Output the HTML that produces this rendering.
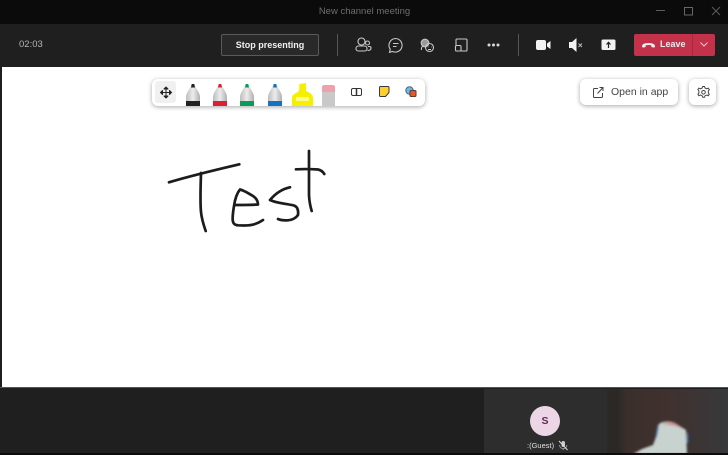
<!DOCTYPE html>
<html><head><meta charset="utf-8">
<style>
html,body{margin:0;padding:0;width:728px;height:455px;overflow:hidden;background:#1f1f1f;font-family:"Liberation Sans",sans-serif}
#w{position:absolute;left:0;top:0;width:728px;height:455px;filter:blur(.3px)}
.a{position:absolute}
svg{position:absolute;overflow:visible}
.pill{background:#fff;border-radius:6px;box-shadow:0 1px 5px rgba(0,0,0,.35)}
</style></head>
<body><div id="w">
<div class="a" style="left:0;top:0;width:728px;height:24px;background:#0b0b0b"></div>
<div class="a" style="left:0;top:24px;width:728px;height:43px;background:#1f1f1f"></div>
<div class="a" style="left:0;top:5px;width:729px;text-align:center;color:#6e6e6e;font-size:9.500px;line-height:13px">New channel meeting</div>
<svg style="left:0;top:0" width="728" height="67" fill="none" stroke="#8a8a8a">
<path d="M656 10.500h9" stroke="#5c5c5c"/><rect x="684.500" y="7.500" width="8" height="7.500" stroke="#666"/><path d="M712 7l8 8M720 7l-8 8" stroke="#5c5c5c"/>
<path d="M337.500 34v22M518.500 34v22" stroke="#555"/>
<g stroke="#c8c8c8" stroke-width="1.100">
<circle cx="361.500" cy="41.500" r="3.500"/><circle cx="367.500" cy="43" r="2"/><rect x="356" y="46" width="11" height="5" rx="2.400"/><path d="M368 46.500h1.500q1.500 0 1.500 1.500q0 2.500-3.500 2.500"/>
<path d="M395.500 38.500a6.800 6.800 0 1 1-3 13l-3 .8 .8-3a6.800 6.800 0 0 1 5.200-10.800z"/><path d="M393 43.500h5.500M393 46.500h3.500"/>
<circle cx="425" cy="43" r="3.800" fill="#999"/><path d="M421.500 50q-.5-3.500 2-4"/><circle cx="429.500" cy="47.500" r="4"/><path d="M428 47h.5M431 47h.5M428 49.500h3"/>
<path d="M456 45v-5q0-1 1-1h9q1 0 1 1v10q0 1-1 1h-5"/><rect x="455.500" y="45.500" width="5.500" height="5.500" rx="1"/>
</g>
<g fill="#d8d8d8" stroke="none"><circle cx="489" cy="45" r="1.500"/><circle cx="493.500" cy="45" r="1.500"/><circle cx="498" cy="45" r="1.500"/></g>
<g fill="#f2f2f2" stroke="none">
<rect x="536" y="40" width="10" height="10" rx="2"/><path d="M547 43.500l3.500-2.500v8l-3.500-2.500z"/>
<path d="M569 42h3l4.500-4v14l-4.500-4h-3z"/>
<path d="M603 39.500h11q1.500 0 1.500 1.500v7.500q0 1.500-1.500 1.500h-11q-1.500 0-1.500-1.500v-7.500q0-1.500 1.500-1.500z"/>
</g>
<path d="M578.500 43.500l3.500 3.500M582 43.500l-3.500 3.500" stroke="#bbb"/>
<path d="M608.500 48v-5.500M606.500 44.500l2-2.200 2 2.200" stroke="#222" stroke-width="1.200"/>
</svg>
<div class="a" style="left:19px;top:39px;color:#b5b5b5;font-size:9.500px;line-height:12px">02:03</div>
<div class="a" style="left:221px;top:34px;width:96px;height:20px;border:1px solid #5a5a5a;border-radius:2px;background:#292929;color:#f0f0f0;font-size:9px;font-weight:bold;line-height:21px;text-align:center">Stop presenting</div>
<div class="a" style="left:634px;top:34px;width:58px;height:22px;background:#c4314b;border-radius:2px 0 0 2px;color:#eee;font-size:9px;font-weight:bold;line-height:21px;text-indent:26px">Leave</div>
<div class="a" style="left:692px;top:34px;width:1px;height:22px;background:#a82a41"></div>
<div class="a" style="left:693px;top:34px;width:22px;height:22px;background:#c4314b;border-radius:0 2px 2px 0"></div>
<svg style="left:0;top:0" width="728" height="67" fill="none">
<path d="M642 46.500q0-3.500 6.500-3.500t6.500 3.500q0 1-1.500 1l-1.500-.2q-.8-.2-.8-2q-2.700-.7-5.400 0q0 1.800-.8 2l-1.500.2q-1.500 0-1.500-1z" fill="#f5e8ea"/>
<path d="M700.500 42.500l3.500 3.500 3.500-3.500" stroke="#efc8cf"/>
</svg>

<div class="a" style="left:2px;top:67px;width:726px;height:320px;background:#fff"></div>
<div class="a" style="left:0;top:387px;width:728px;height:1px;background:#555"></div>

<svg style="left:0;top:0" width="728" height="455" fill="none" stroke="#1c1c1c" stroke-width="2.700" stroke-linecap="round" stroke-linejoin="round">
<path d="M169 182.300C190 176 215 170 239.300 164.300"/>
<path d="M201 173C200.500 190 200 202 201 212C201.800 220 204 226 205.700 231"/>
<path d="M235 205C242 205 252 205 258 204.500C258 201 256 198 253 196C248 193 243 190 240 189.500C237 193 235 199 234 206C233 212 232.500 217 232.700 220C233 224 235 225 238 225.300C243 225.600 249 225.500 252 224.800C256 224 260 222 263 220"/>
<path d="M290 187.300C282 189 275 194 270 200C276 203 288 204 294 205.500C298 207 298.500 211 298 215C296 218 292 220 288 220.300C284 220.500 280 220 278 219"/>
<path d="M309 151C309 165 309 180 309 195C309.300 202 310.500 207 311.700 211"/>
<path d="M296 169.300C303 169 311 169 318 169.500C321 170 323 172 324.300 174"/>
</svg>

<div class="a pill" style="left:152px;top:79px;width:273px;height:27px"></div>
<div class="a" style="left:155px;top:81px;width:21px;height:22px;background:#f0f0f0;border-radius:3px"></div>
<svg style="left:0;top:0" width="728" height="110">
<defs>
<linearGradient id="g" x1="0" x2="1" y1="0" y2="0"><stop offset="0" stop-color="#bdbdbd"/><stop offset=".5" stop-color="#ececec"/><stop offset="1" stop-color="#b0b0b0"/></linearGradient>
<g id="pen"><path d="M-7 22v-9q0-2 1-4l4.300-7.500h3.400L6 9q1 2 1 4v9z" fill="url(#g)"/><rect x="-7" y="17" width="14" height="5"/><path d="M-2 3.500L-1.300 0h2.600L2 3.500z"/></g>
</defs>
<path d="M166 87l-2 2h4zM166 98l-2-2h4zM160.500 92.500l2-2v4zM171.500 92.500l-2-2v4z" fill="#222" stroke="#222" stroke-linejoin="round"/>
<path d="M166 89v7M162.500 92.500h7" stroke="#222"/>
<use href="#pen" x="193" y="84" fill="#222"/>
<use href="#pen" x="220" y="84" fill="#dc2034"/>
<use href="#pen" x="247" y="84" fill="#0a9a5a"/>
<use href="#pen" x="275" y="84" fill="#1272c4"/>
<path d="M292 106V98q0-3 4-5l3-2 .5-7 6.500-1v8l4 2q3 2 3 5v8z" fill="#f5f000"/>
<path d="M296 97h13v4h-13z" fill="#fdfb90"/>
<path d="M322 106V88q0-3 2-3h9q2 0 2 3v18z" fill="#c9c9c9"/>
<path d="M322 92v-4q0-3 2-3h9q2 0 2 3v4z" fill="#f0a0ac"/>
<rect x="351.500" y="88.500" width="10" height="7" rx="1.500" fill="none" stroke="#333"/>
<path d="M356.500 88.500v7" stroke="#333" stroke-width="1.500"/>
<path d="M379.500 87.500q0-1 1-1h7.500q1 0 1 1v5l-3.500 4h-5q-1 0-1-1z" fill="#ffcf2e" stroke="#3a3a3a"/>
<circle cx="409.500" cy="90.500" r="3.700" fill="#6fb7ea" stroke="#4a6a80"/>
<rect x="410" y="90.500" width="6" height="6" rx="1" fill="#e8562a" stroke="#5a3a30"/>
</svg>

<div class="a pill" style="left:580px;top:79px;width:98px;height:26px"></div>
<div class="a" style="left:611px;top:85px;color:#444;font-size:10.500px;line-height:14px">Open in app</div>
<div class="a pill" style="left:689px;top:79px;width:27px;height:26px"></div>
<svg style="left:0;top:0" width="728" height="110" fill="none" stroke="#444">
<path d="M598 88.500h-3.500q-1 0-1 1v7q0 1 1 1h7q1 0 1-1v-3.500M597.500 93.500l5.500-6M599.500 87.500h3.500v3.500"/>
<path d="M702.700 86.500l1.800 0 .6 1.600 1.700.7 1.500-.7 1 1.500-1 1.400v1.800l1 1.400-1 1.500-1.500-.7-1.700.7-.6 1.600h-1.800l-.6-1.600-1.700-.7-1.500.7-1-1.500 1-1.400v-1.800l-1-1.400 1-1.500 1.500.7 1.700-.7z"/>
<circle cx="703.500" cy="92.300" r="1.800"/>
</svg>

<div class="a" style="left:0;top:388px;width:728px;height:65px;background:#1f1f1f"></div>
<div class="a" style="left:0;top:453px;width:728px;height:2px;background:#0c0c0c"></div>
<div class="a" style="left:484px;top:389px;width:123px;height:64px;background:#2d2d2d"></div>
<div class="a" style="left:530px;top:406px;width:30px;height:30px;border-radius:50%;background:#ecd6e6;color:#5f2a5c;font-size:10.500px;font-weight:bold;line-height:30px;text-align:center">S</div>
<div class="a" style="left:527px;top:441px;color:#e0e0e0;font-size:7.500px;line-height:10px">:(Guest)</div>
<svg style="left:0;top:0" width="728" height="455" fill="none">
<rect x="561.500" y="441" width="3.500" height="6" rx="1.700" fill="#ccc"/><path d="M559.500 445q.3 3.500 3.700 3.500t3.700-3.500M563.200 448.500v1.500" stroke="#aaa" stroke-width=".8"/><path d="M559 441l8.500 9" stroke="#ddd"/>
</svg>

<svg style="left:607px;top:389px;overflow:hidden" width="121" height="64" viewBox="0 0 121 64">
<defs>
<linearGradient id="bg" x1="0" x2="1" y1="0" y2="0"><stop offset="0" stop-color="#2b2825"/><stop offset=".09" stop-color="#2c2825"/><stop offset=".16" stop-color="#3a2f2c"/><stop offset=".5" stop-color="#40312e"/><stop offset="1" stop-color="#37393b"/></linearGradient>
<filter id="b"><feGaussianBlur stdDeviation="1"/></filter>
</defs>
<rect width="121" height="64" fill="url(#bg)"/>
<g filter="url(#b)">
<path d="M50 38l3-4q8-3 15 0l11 7 1 24H26l9-5 11-4 3-8z" fill="#c8d2ce"/>
<path d="M55 35q6-3 13-1l9 6q-10-4-22-5z" fill="#cf8f92"/>
<path d="M51 37l-2 11" stroke="#2f6fa8" stroke-width="1.800" fill="none"/>
<path d="M80.500 44v10" stroke="#2f6fa8" stroke-width="1.800" fill="none"/>
</g>
</svg>
</div></body></html>
